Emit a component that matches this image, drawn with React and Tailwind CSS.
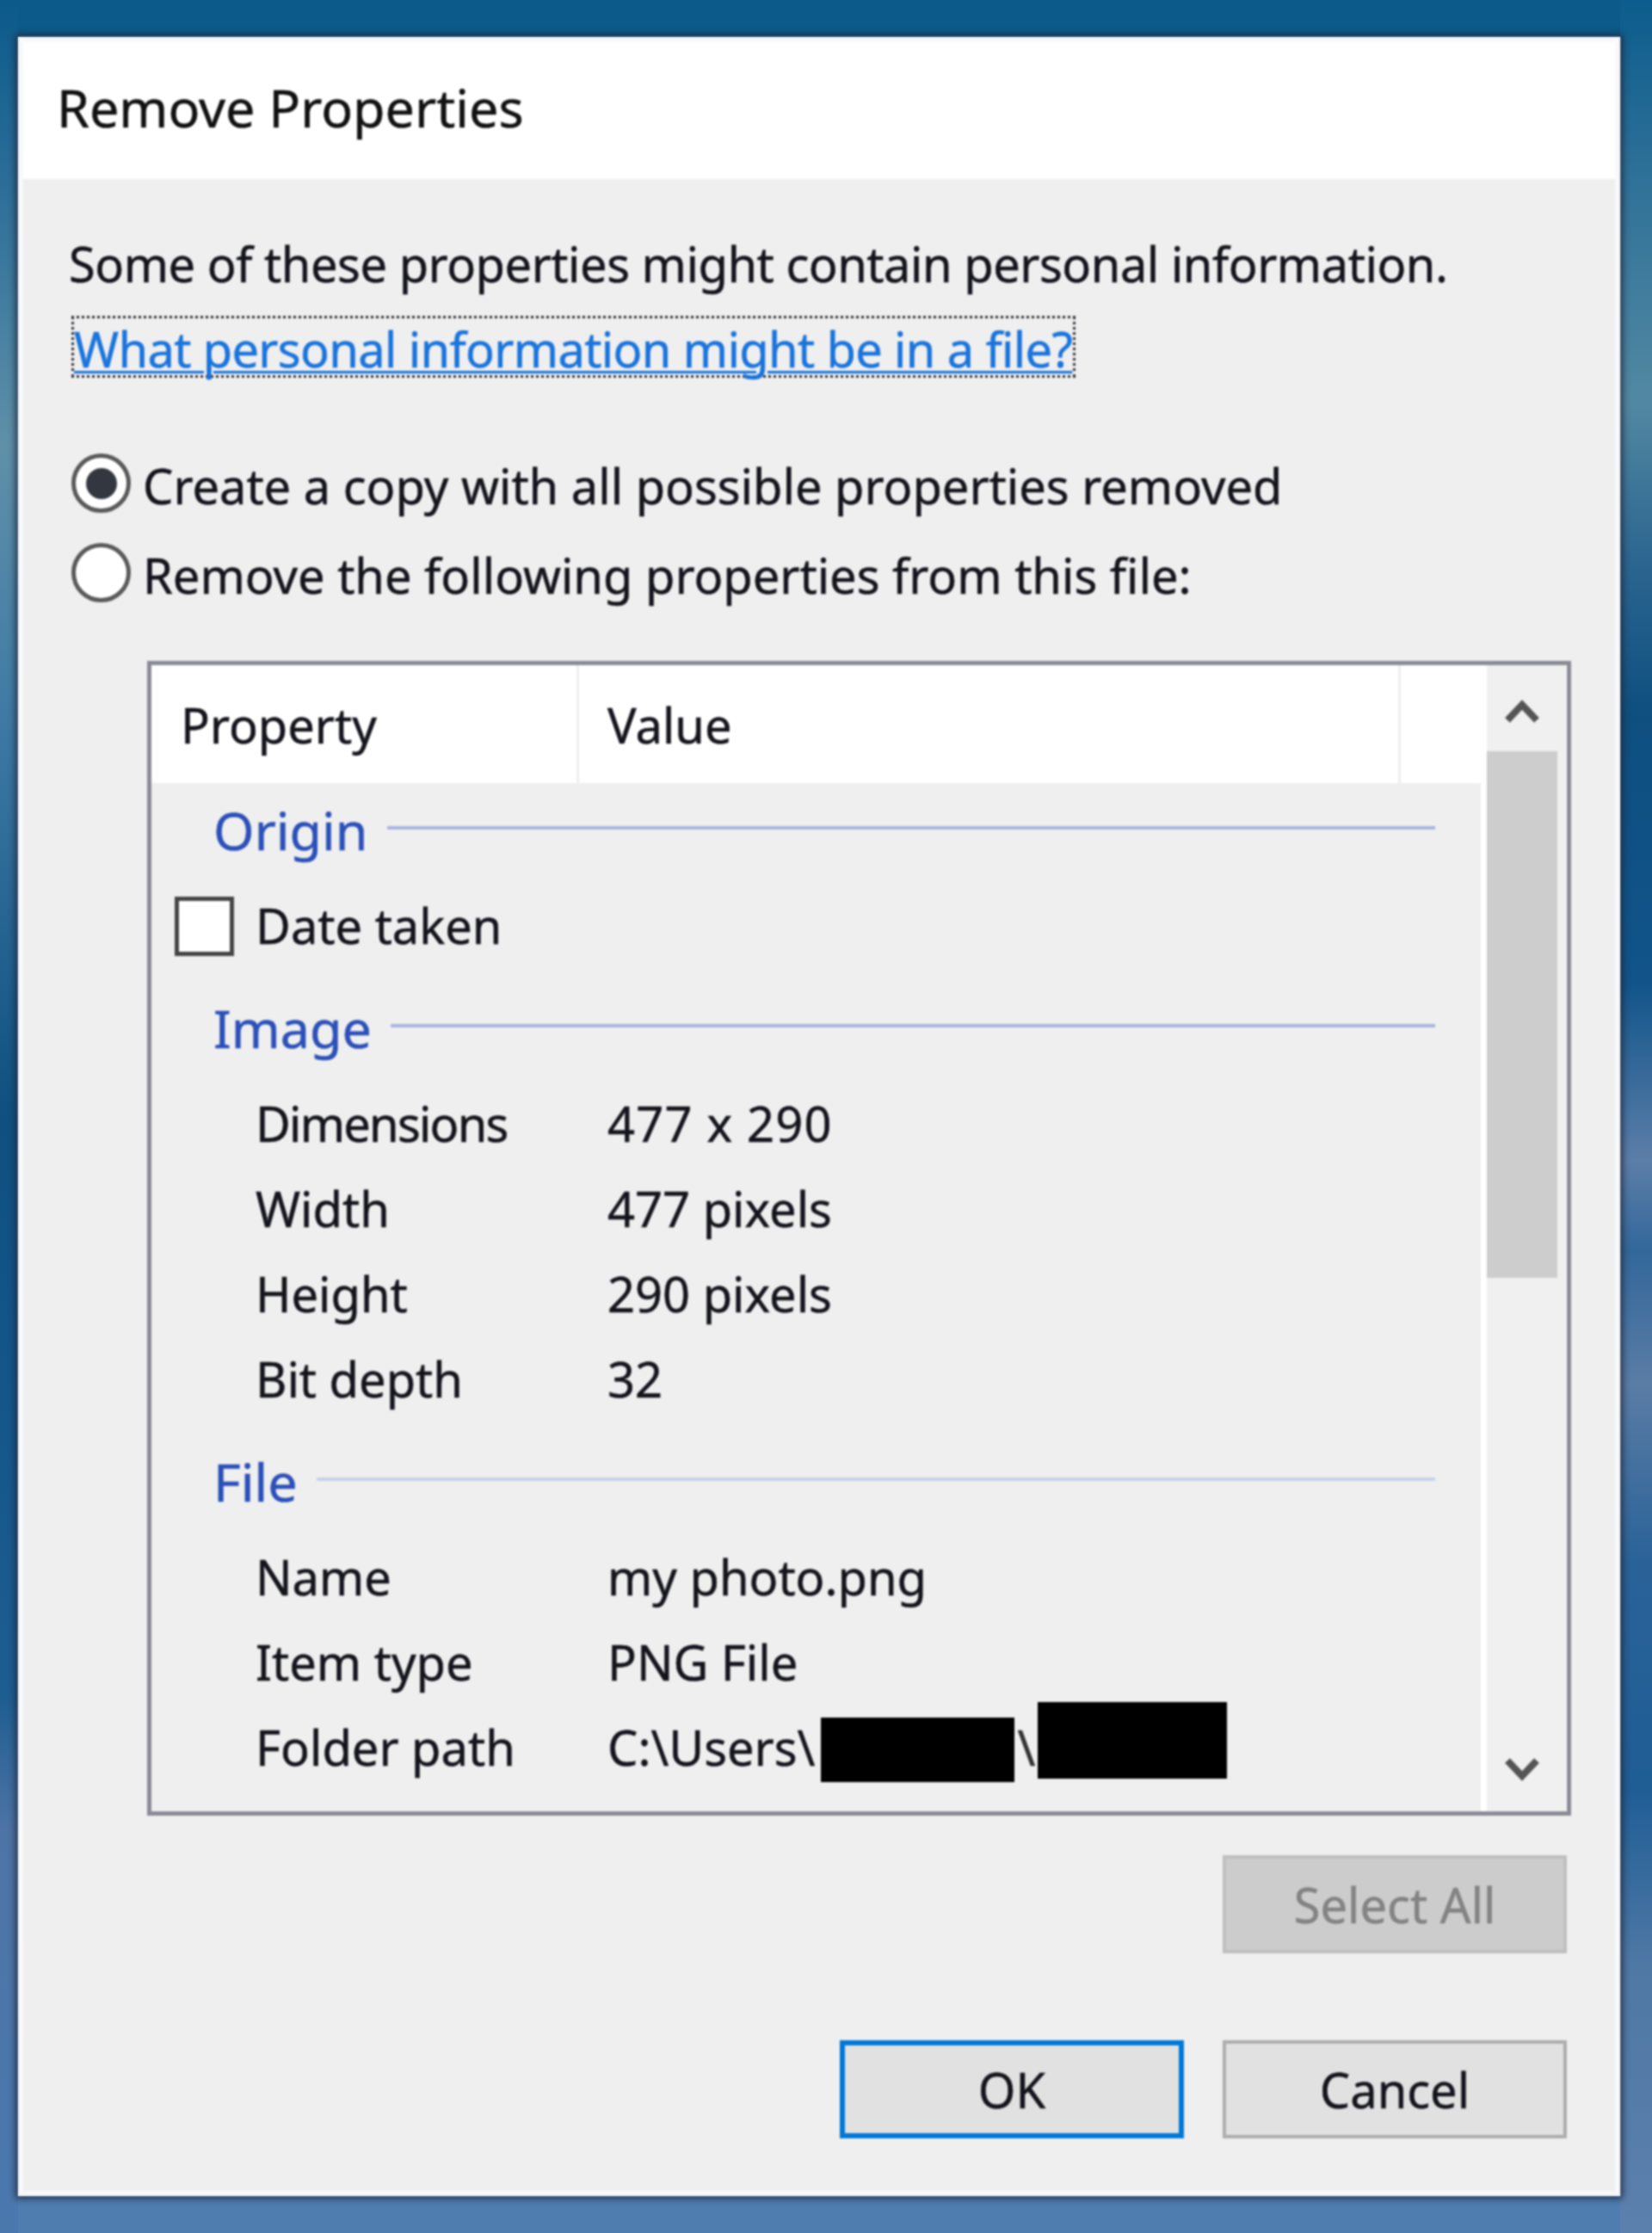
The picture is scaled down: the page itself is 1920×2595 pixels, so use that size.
import React from "react";

const Group = ({ title, lineClass, rowClass }) => (
  <div className={`flex items-center gap-[22px] pl-[72px] pr-[53px] ${rowClass}`}>
    <span className="text-[61px] text-[#2b50b8]">{title}</span>
    <div className={`h-[4px] flex-1 mb-[6px] ${lineClass}`}></div>
  </div>
);

const Row = ({ label, children }) => (
  <div className="flex h-[99px] items-center pl-[121px] pb-[3px]">
    <span className="w-[409px] shrink-0">{label}</span>
    <span className="flex items-center">{children}</span>
  </div>
);

const Chevron = ({ d }) => (
  <svg width="42" height="36" viewBox="0 0 42 36" fill="none" stroke="#555555" strokeWidth="8">
    <path d={d} />
  </svg>
);

const Button = ({ className, children }) => (
  <div className={`flex h-[114px] w-[400px] items-center justify-center ${className}`}>{children}</div>
);

const App = () => {
  return (
    <div className="flex h-[2595px] w-[1920px] overflow-hidden font-['Noto_Sans',sans-serif] text-[56px] leading-[76px] text-[#14141c] [-webkit-text-stroke:0.5px]">
      <div className="w-[21px] bg-[linear-gradient(180deg,#0b5a8a_0%,#2b6d98_8%,#5f90a8_20%,#3f7aa5_32%,#0f5080_50%,#14568a_62%,#1e5d90_76%,#4e74a6_82%,#4a78ae_100%)]"></div>
      <div className="flex w-[1862px] flex-col">
        <div className="h-[43px] bg-[#0b5a8a]"></div>
        <div className="flex h-[2509px] flex-col border-[6px] border-[#f8f9fc] bg-[#efefef] shadow-[0_0_7px_3px_rgba(30,40,60,0.85)] blur-[1px]">
          <div className="flex h-[159px] shrink-0 items-center bg-white pl-[39px] pb-[8px] text-[61px] text-[#111]">Remove Properties</div>
          <div className="flex flex-1 flex-col pl-[53px] pr-[56px]">
            <div className="mt-[60px] tracking-[-0.47px]">Some of these properties might contain personal information.</div>
            <div className="ml-[3px] mt-[23px] flex h-[72px] w-[1167px] items-center whitespace-nowrap border-[3px] border-dotted border-[#33333a] pt-[4px] tracking-[-0.65px] text-[#1a74dc] underline decoration-[3px] underline-offset-[4px]">
              What personal information might be in a file?
            </div>
            <div className="ml-[3px] mt-[88px] flex h-[69px] items-center gap-[14px]">
              <div className="flex h-[69px] w-[69px] items-center justify-center rounded-full border-[5px] border-[#5a5a5a] bg-white">
                <div className="h-[36px] w-[36px] rounded-full bg-[#333840]"></div>
              </div>
              <span className="mt-[5px]">Create a copy with all possible properties removed</span>
            </div>
            <div className="ml-[3px] mt-[35px] flex h-[69px] items-center gap-[14px]">
              <div className="h-[69px] w-[69px] rounded-full border-[5px] border-[#5a5a5a] bg-white"></div>
              <span className="mt-[5px]">Remove the following properties from this file:</span>
            </div>

            <div className="ml-[91px] mt-[68px] flex h-[1342px] w-[1655px] shrink-0 border-[5px] border-[#8b8b96] bg-white">
              <div className="flex w-[1545px] flex-col">
                <div className="flex h-[137px] shrink-0 items-center bg-white">
                  <span className="flex h-full w-[497px] items-center border-r-[3px] border-[#eeeeee] pl-[34px]">Property</span>
                  <span className="flex h-full w-[955px] items-center border-r-[3px] border-[#eeeeee] pl-[33px]">Value</span>
                </div>
                <div className="flex-1 bg-[#efefef]">
                  <Group title="Origin" lineClass="bg-[#a9b5e2]" rowClass="h-[117px] pb-[7px]" />
                  <div className="flex h-[99px] items-center pl-[27px]">
                    <div className="h-[69px] w-[69px] border-[5px] border-[#454545] bg-white"></div>
                    <span className="ml-[25px] mb-[3px]">Date taken</span>
                  </div>
                  <Group title="Image" lineClass="bg-[#a9b5e2]" rowClass="h-[131px] pt-[7px]" />
                  <Row label={<span className="tracking-[-1.8px]">Dimensions</span>}>
                    <span className="tracking-[1.2px]">477 x 290</span>
                  </Row>
                  <Row label="Width">477 pixels</Row>
                  <Row label="Height">290 pixels</Row>
                  <Row label="Bit depth">32</Row>
                  <Group title="File" lineClass="bg-[#c6d3ea]" rowClass="h-[131px] pt-[7px]" />
                  <Row label="Name">my photo.png</Row>
                  <Row label="Item type">PNG File</Row>
                  <Row label="Folder path">
                    C:\Users\
                    <span className="ml-[7px] mt-[6px] h-[75px] w-[225px] bg-black"></span>
                    <span className="mx-[3px] text-[#333]">\</span>
                    <span className="mb-[16px] h-[89px] w-[220px] bg-black"></span>
                  </Row>
                </div>
              </div>
              <div className="ml-[7px] flex w-[92px] flex-col bg-[#f0f0f0]">
                <div className="flex h-[100px] items-center justify-center pr-[10px] pt-[8px]">
                  <Chevron d="M4 28 L21 10 L38 28" />
                </div>
                <div className="h-[612px] w-[82px] bg-[#cdcdcd]"></div>
                <div className="flex flex-1 items-end justify-center pb-[31px] pr-[10px]">
                  <Chevron d="M4 8 L21 26 L38 8" />
                </div>
              </div>
            </div>

            <div className="ml-[1341px] mt-[46px]">
              <Button className="border-[4px] border-[#bfbfbf] bg-[#cccccc] text-[#838383]">Select All</Button>
            </div>
            <div className="mt-[101px] flex justify-end gap-[45px]">
              <Button className="border-[6px] border-[#0078d7] bg-[#e1e1e1]">OK</Button>
              <Button className="border-[4px] border-[#adadad] bg-[#e1e1e1]">Cancel</Button>
            </div>
          </div>
        </div>
        <div className="h-[43px] bg-[#4f7db0]"></div>
      </div>
      <div className="w-[37px] bg-[linear-gradient(180deg,#0c5c8d_0%,#2f7198_8%,#5288a2_18%,#2d6690_25%,#0e4f80_32%,#11548a_44%,#5c7ea8_52%,#33679a_56%,#5a7ca5_62%,#2a6298_70%,#1f5d95_80%,#4f78a5_88%,#5c80ad_100%)]"></div>
    </div>
  );
};

export default App;
